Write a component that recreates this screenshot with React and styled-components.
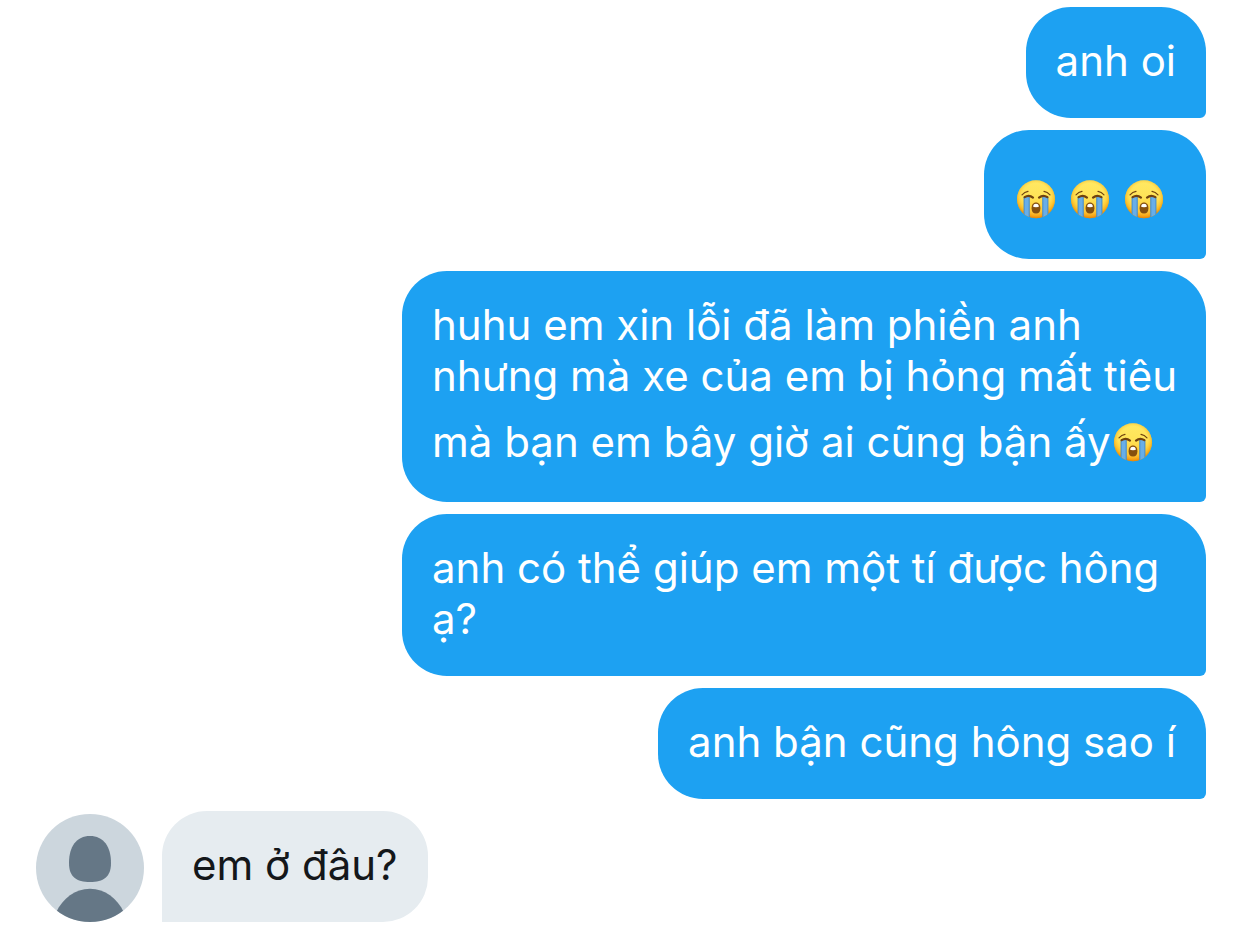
import React from "react";
import styled, { createGlobalStyle, css } from "styled-components";

const GlobalStyle = createGlobalStyle`
  *, *::before, *::after { box-sizing: border-box; }
  body {
    margin: 0;
    background: #ffffff;
    font-family: Inter, "Noto Sans", "Liberation Sans", sans-serif;
  }
`;

const Conversation = styled.main`
  padding: 7px 36px 8px;
`;

const MessageList = styled.ol`
  display: flex;
  flex-direction: column;
  gap: 12px;
  margin: 0;
  padding: 0;
  list-style: none;
`;

const Message = styled.li`
  display: flex;
  align-items: flex-end;
  gap: 18px;
  justify-content: ${({ $sent }) => ($sent ? "flex-end" : "flex-start")};
`;

const sentColors = css`
  border-radius: 45px 45px 6px 45px;
  background: #1da1f2;
  color: #ffffff;
`;

const receivedColors = css`
  border-radius: 45px 45px 45px 0;
  background: #e6ecf0;
  color: #14171a;
`;

const Bubble = styled.p`
  max-width: calc(100% - 366px);
  margin: 0;
  padding: 28px ${({ $long }) => ($long ? "24px" : "30px")} 32px 30px;
  font-size: 42px;
  line-height: 51px;
  ${({ $sent }) => ($sent ? sentColors : receivedColors)}
`;

const EmojiRun = styled.span`
  display: flex;
  gap: 10px;
  padding-right: 10px;
`;

const EmojiSvg = styled.svg`
  width: 39px;
  height: 39px;
  margin: 22px 2px 8px 3px;
  vertical-align: -13px;
`;

const AvatarSvg = styled.svg`
  flex: none;
  width: 108px;
  height: 108px;
`;

function CryingEmoji() {
  const id = React.useId();
  const face = `${id}face`;
  const rim = `${id}rim`;
  const tear = `${id}tear`;
  const clip = `${id}clip`;
  return (
    <EmojiSvg viewBox="0 0 39 39" role="img" aria-label="😭">
      <defs>
        <linearGradient id={face} x1="0" y1="0" x2="0" y2="1">
          <stop offset="0" stopColor="#ffe65a" />
          <stop offset="0.45" stopColor="#ffdd48" />
          <stop offset="0.75" stopColor="#ffbe1e" />
          <stop offset="1" stopColor="#f9980f" />
        </linearGradient>
        <radialGradient id={rim} cx="0.5" cy="0.46" r="0.54">
          <stop offset="0" stopColor="#fff27a" stopOpacity="0.3" />
          <stop offset="0.7" stopColor="#fff07a" stopOpacity="0.3" />
          <stop offset="0.88" stopColor="#f5ac1c" stopOpacity="0.45" />
          <stop offset="1" stopColor="#e07c05" stopOpacity="0.9" />
        </radialGradient>
        <linearGradient id={tear} x1="0" y1="0" x2="1" y2="0">
          <stop offset="0" stopColor="#3f88c8" />
          <stop offset="0.3" stopColor="#68aee8" />
          <stop offset="0.7" stopColor="#68aee8" />
          <stop offset="1" stopColor="#3f88c8" />
        </linearGradient>
        <clipPath id={clip}>
          <circle cx="19" cy="19.2" r="19" />
        </clipPath>
      </defs>
      <circle cx="19" cy="19.2" r="19" fill={`url(#${face})`} />
      <circle cx="19" cy="19.2" r="19" fill={`url(#${rim})`} />
      <g clipPath={`url(#${clip})`}>
        <path d="M6.6 17Q9.6 16 12.8 17.2V39H6.6Z" fill={`url(#${tear})`} />
        <path d="M25.2 17.2Q28.4 16 31.4 17V39H25.2Z" fill={`url(#${tear})`} />
      </g>
      <g fill="none" stroke="#70420f" strokeLinecap="round">
        <path d="M5 14.8Q7.6 12 11 11.4" strokeWidth="1.2" />
        <path d="M33 14.8Q30.4 12 27 11.4" strokeWidth="1.2" />
        <path d="M7.6 17.2Q12 14.2 16 17.6" strokeWidth="2.2" />
        <path d="M22 17.6Q26 14.2 30.4 17.2" strokeWidth="2.2" />
      </g>
      <path
        d="M19 22.6C21.8 22.6 23.4 24.8 23.4 28.2C23.4 31.8 22 33.4 19 33.4C16 33.4 14.6 31.8 14.6 28.2C14.6 24.8 16.2 22.6 19 22.6Z"
        fill="#85500f"
      />
      <path
        d="M16 26.2Q16.6 23.8 19 23.8Q21.4 23.8 22 26.2Q21.8 27.2 19 27.2Q16.2 27.2 16 26.2Z"
        fill="#ffffff"
      />
    </EmojiSvg>
  );
}

function Avatar() {
  const clip = React.useId();
  return (
    <AvatarSvg viewBox="0 0 108 108" role="img" aria-label="Avatar">
      <clipPath id={clip}>
        <circle cx="54" cy="54" r="54" />
      </clipPath>
      <circle cx="54" cy="54" r="54" fill="#ccd6dd" />
      <g clipPath={`url(#${clip})`} fill="#657786">
        <path d="M54 22C67.5 22 75 32.5 75 49C75 63 67.5 68 54 68C40.5 68 33 63 33 49C33 32.5 40.5 22 54 22Z" />
        <path d="M20 98.5C27 84 39 74.7 54 74.7C69 74.7 81 84 88 98.5V108H20Z" />
      </g>
    </AvatarSvg>
  );
}

const messages = [
  { id: 1, sent: true, body: "anh oi" },
  {
    id: 2,
    sent: true,
    body: (
      <EmojiRun>
        <CryingEmoji />
        <CryingEmoji />
        <CryingEmoji />
      </EmojiRun>
    ),
  },
  {
    id: 3,
    sent: true,
    long: true,
    body: (
      <>
        huhu em xin lỗi đã làm phiền anh nhưng mà xe của em bị hỏng mất tiêu mà
        bạn em bây giờ ai cũng bận ấy
        <CryingEmoji />
      </>
    ),
  },
  {
    id: 4,
    sent: true,
    long: true,
    body: "anh có thể giúp em một tí được hông ạ?",
  },
  { id: 5, sent: true, body: "anh bận cũng hông sao í" },
  { id: 6, sent: false, body: "em ở đâu?" },
];

export default function App() {
  return (
    <>
      <GlobalStyle />
      <Conversation>
        <MessageList>
          {messages.map(({ id, sent, long, body }) => (
            <Message key={id} $sent={sent}>
              {!sent && <Avatar />}
              <Bubble $sent={sent} $long={long}>
                {body}
              </Bubble>
            </Message>
          ))}
        </MessageList>
      </Conversation>
    </>
  );
}
